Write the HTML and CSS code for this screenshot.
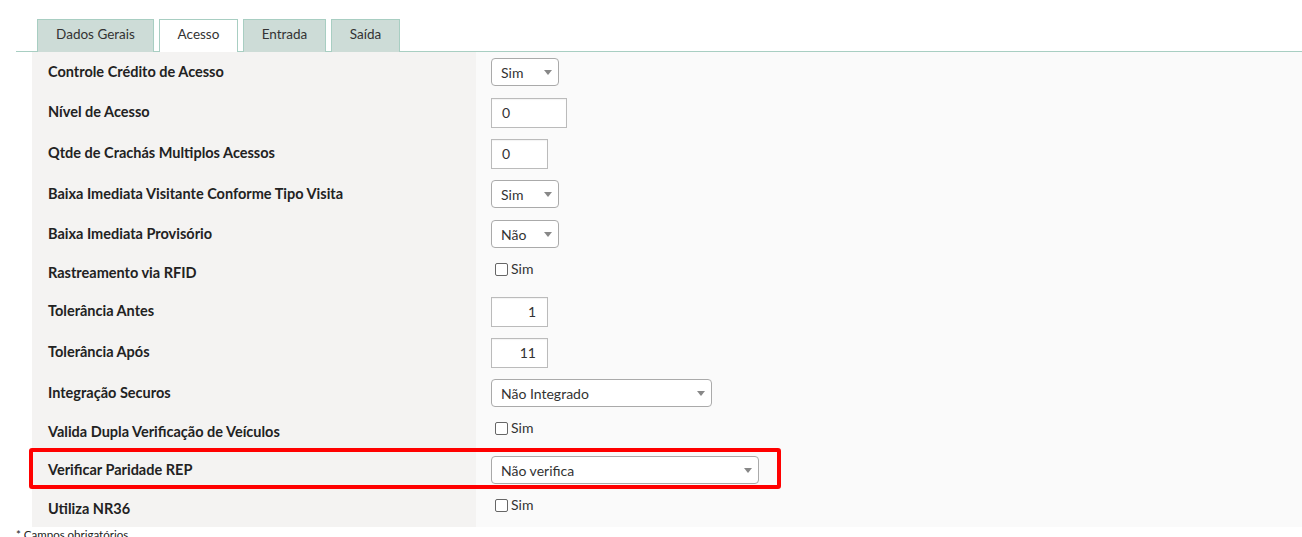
FILE: index.html
```html
<!DOCTYPE html>
<html>
<head>
  <meta charset="UTF-8" />
  <title>Acesso</title>
  <link rel="stylesheet" href="styles.css">
</head>
<body>
  <div class="page">
    <div class="tabs">
      <div class="tab">Dados Gerais</div>
      <div class="tab active">Acesso</div>
      <div class="tab">Entrada</div>
      <div class="tab">Saída</div>
    </div>

    <div class="form">
      <div class="row sel">
        <div class="label">Controle Crédito de Acesso</div>
        <div class="value"><div class="select w-sm"><span>Sim</span><i class="caret"></i></div></div>
      </div>
      <div class="row inp">
        <div class="label">Nível de Acesso</div>
        <div class="value"><div class="input w-md">0</div></div>
      </div>
      <div class="row inp">
        <div class="label">Qtde de Crachás Multiplos Acessos</div>
        <div class="value"><div class="input w-xs">0</div></div>
      </div>
      <div class="row sel">
        <div class="label">Baixa Imediata Visitante Conforme Tipo Visita</div>
        <div class="value"><div class="select w-sm"><span>Sim</span><i class="caret"></i></div></div>
      </div>
      <div class="row sel">
        <div class="label">Baixa Imediata Provisório</div>
        <div class="value"><div class="select w-sm"><span>Não</span><i class="caret"></i></div></div>
      </div>
      <div class="row chk">
        <div class="label">Rastreamento via RFID</div>
        <div class="value"><label class="check"><span class="box"></span>Sim</label></div>
      </div>
      <div class="row inp">
        <div class="label">Tolerância Antes</div>
        <div class="value"><div class="input w-xs num">1</div></div>
      </div>
      <div class="row inp">
        <div class="label">Tolerância Após</div>
        <div class="value"><div class="input w-xs num">11</div></div>
      </div>
      <div class="row sel">
        <div class="label">Integração Securos</div>
        <div class="value"><div class="select w-lg"><span>Não Integrado</span><i class="caret"></i></div></div>
      </div>
      <div class="row chk">
        <div class="label">Valida Dupla Verificação de Veículos</div>
        <div class="value"><label class="check"><span class="box"></span>Sim</label></div>
      </div>
      <div class="row sel marked">
        <div class="label">Verificar Paridade REP</div>
        <div class="value"><div class="select w-xl"><span>Não verifica</span><i class="caret"></i></div></div>
        <div class="highlight"></div>
      </div>
      <div class="row chk">
        <div class="label">Utiliza NR36</div>
        <div class="value"><label class="check"><span class="box"></span>Sim</label></div>
      </div>
    </div>

    <div class="note">* Campos obrigatórios</div>
  </div>
</body>
</html>
```

FILE: styles.css
```css
body {
  margin: 0;
  background: #fff;
  font-family: "Segoe UI", Lato, "Open Sans", sans-serif;
  color: #222;
  overflow: hidden;
}
.page {
  padding: 19px 0 0 16px;
}
.tabs {
  display: flex;
  gap: 5px;
  padding-left: 21px;
  border-bottom: 1px solid #a8cec2;
  height: 32px;
}
.tab {
  box-sizing: border-box;
  height: 33px;
  padding-top: 6px;
  text-align: center;
  background: #cddcd7;
  border: 1px solid #a8cec2;
  border-bottom: none;
  font-size: 13.5px;
  color: #333;
}
.tab:nth-child(1) { width: 117px; }
.tab:nth-child(2) { width: 79px; }
.tab:nth-child(3) { width: 83px; }
.tab:nth-child(4) { width: 69px; }
.tab.active {
  background: #fff;
  margin-bottom: -1px;
}

.form {
  margin-left: 16px;
  background: #fafafa;
}
.row {
  display: flex;
  position: relative;
}
.row.sel { height: 40px; }
.row.inp { height: 41px; }
.row.chk { height: 37px; }
.label {
  box-sizing: border-box;
  width: 444px;
  flex: none;
  padding-left: 16px;
  background: #f4f3f2;
  display: flex;
  align-items: center;
  font-weight: bold;
  font-size: 14.5px;
  color: #222;
}
.row.sel .label { padding-bottom: 2px; }
.row.inp .label { padding-bottom: 3px; }
.value {
  padding-left: 15px;
  display: flex;
  align-items: center;
  font-size: 14px;
  color: #333;
}
.row.chk .value {
  align-items: flex-start;
  padding-top: 8px;
  padding-left: 19px;
}

.select {
  box-sizing: border-box;
  height: 28px;
  border: 1px solid #aaa;
  border-radius: 4px;
  background: #fff;
  display: flex;
  align-items: center;
  justify-content: space-between;
  padding: 0 6px 0 9px;
}
.caret {
  width: 0;
  height: 0;
  border-left: 4px solid transparent;
  border-right: 4px solid transparent;
  border-top: 5px solid #888;
  margin-top: 1px;
}
.input {
  box-sizing: border-box;
  height: 30px;
  border: 1px solid #bbb;
  background: #fff;
  padding: 5px 10px 0;
  box-shadow: inset 0 1px 1px rgba(0,0,0,0.05);
}
.input.num { text-align: right; padding-right: 11px; }
.w-xs { width: 57px; }
.w-sm { width: 68px; }
.w-md { width: 76px; }
.w-lg { width: 221px; }
.w-xl { width: 268px; }

.check {
  display: flex;
  align-items: center;
  gap: 3px;
  line-height: 14px;
}
.box {
  width: 11px;
  height: 11px;
  border: 1px solid #666;
  border-radius: 2px;
  background: #fff;
}

.highlight {
  position: absolute;
  left: -3px;
  top: -2px;
  width: 752px;
  height: 41px;
  box-sizing: border-box;
  border: 4px solid #ff0000;
  border-radius: 3px;
}

.note {
  font-size: 11.5px;
  color: #222;
  margin-top: 1px;
}
```
